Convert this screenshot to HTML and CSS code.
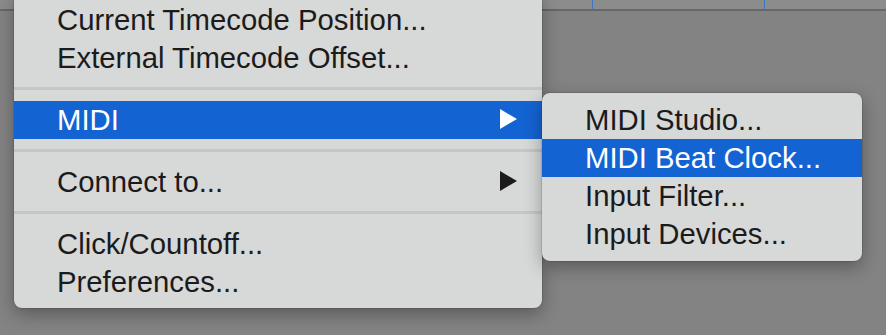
FILE: index.html
```html
<!DOCTYPE html>
<html>
<head>
<meta charset="utf-8">
<link rel="stylesheet" href="styles.css">
</head>
<body>
<div class="stage">
  <div class="topbar">
    <span class="tick tick-a"></span>
    <span class="tick tick-b"></span>
  </div>

  <div class="menu main-menu">
    <div class="item">Current Timecode Position...</div>
    <div class="item">External Timecode Offset...</div>
    <div class="sep"></div>
    <div class="item active has-sub">
      <span>MIDI</span>
      <svg class="arrow" width="17" height="20" viewBox="0 0 17 20"><path d="M0 0 L17 10 L0 20 Z"/></svg>
    </div>
    <div class="sep"></div>
    <div class="item has-sub">
      <span>Connect to...</span>
      <svg class="arrow" width="17" height="20" viewBox="0 0 17 20"><path d="M0 0 L17 10 L0 20 Z"/></svg>
    </div>
    <div class="sep"></div>
    <div class="item">Click/Countoff...</div>
    <div class="item">Preferences...</div>
  </div>

  <div class="menu sub-menu">
    <div class="item">MIDI Studio...</div>
    <div class="item active">MIDI Beat Clock...</div>
    <div class="item">Input Filter...</div>
    <div class="item">Input Devices...</div>
  </div>
</div>
</body>
</html>
```

FILE: styles.css
```css
html, body {
  margin: 0;
  padding: 0;
}
body {
  background: #838383;
  font-family: "Liberation Sans", Arial, sans-serif;
  overflow: hidden;
}
.stage {
  position: relative;
  width: 886px;
  height: 335px;
  background: #838383;
  overflow: hidden;
}
.topbar {
  position: relative;
  height: 9px;
  background: #8c8c8c;
  border-bottom: 2px solid #676767;
}
.tick {
  position: absolute;
  top: 0;
  width: 1px;
  height: 10px;
  background: #3c77c4;
}
.tick-a { left: 592px; }
.tick-b { left: 764px; }

.menu {
  position: absolute;
  background: #d7d8d8;
  border-radius: 8px;
  box-shadow: 0 0 0 1px rgba(0,0,0,0.10), 0 6px 18px rgba(0,0,0,0.32);
  display: flex;
  flex-direction: column;
}
.main-menu {
  left: 14px;
  top: -7px;
  width: 528px;
  padding: 8px 0 7px;
  border-radius: 0 0 8px 8px;
  z-index: 1;
}
.sub-menu {
  left: 542px;
  top: 93px;
  width: 320px;
  padding: 8px 0;
  z-index: 2;
}
.item {
  height: 38px;
  line-height: 38px;
  font-size: 29.3px;
  color: #1b1b1b;
  padding-left: 43px;
  display: flex;
  align-items: center;
  justify-content: space-between;
  white-space: nowrap;
}
.item.active {
  background: #1463d3;
  color: #ffffff;
}
.arrow {
  margin-right: 25px;
  margin-top: -2px;
  fill: #1b1b1b;
}
.item.active .arrow {
  fill: #ffffff;
}
.sep {
  height: 3px;
  margin: 10px 0 11px;
  background: #c5c6c6;
}
```
